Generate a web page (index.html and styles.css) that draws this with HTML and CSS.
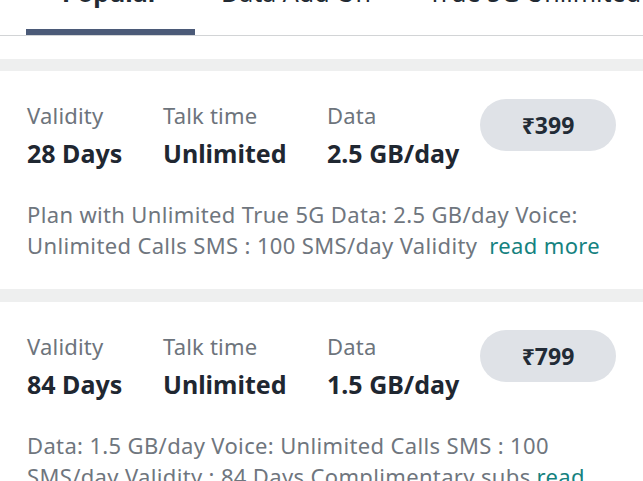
FILE: index.html
```html
<!DOCTYPE html>
<html lang="en">
<head>
<meta charset="utf-8">
<title>Plans</title>
<link rel="stylesheet" href="styles.css">
</head>
<body>
<nav class="tabs">
  <div class="tab tab-active"><span class="tab-label">Popular</span></div>
  <div class="tab tab-data"><span class="tab-label">Data Add On</span></div>
  <div class="tab tab-5g"><span class="tab-label">True 5G Unlimited</span></div>
</nav>
<div class="spacer"></div>
<div class="band"></div>
<section class="card">
  <div class="row">
    <div class="col col-validity">
      <div class="label">Validity</div>
      <div class="value">28 Days</div>
    </div>
    <div class="col col-talk">
      <div class="label">Talk time</div>
      <div class="value">Unlimited</div>
    </div>
    <div class="col col-data">
      <div class="label">Data</div>
      <div class="value">2.5 GB/day</div>
    </div>
    <div class="price">₹399</div>
  </div>
  <p class="desc">Plan with Unlimited True 5G Data: 2.5 GB/day Voice: Unlimited Calls SMS : 100 SMS/day Validity <a class="more more-gap" href="#">read more</a></p>
</section>
<div class="band band-b"></div>
<section class="card">
  <div class="row">
    <div class="col col-validity">
      <div class="label">Validity</div>
      <div class="value">84 Days</div>
    </div>
    <div class="col col-talk">
      <div class="label">Talk time</div>
      <div class="value">Unlimited</div>
    </div>
    <div class="col col-data">
      <div class="label">Data</div>
      <div class="value">1.5 GB/day</div>
    </div>
    <div class="price">₹799</div>
  </div>
  <p class="desc">Data: 1.5 GB/day Voice: Unlimited Calls SMS : 100 SMS/day Validity : 84 Days Complimentary subs <a class="more" href="#">read more</a></p>
</section>
</body>
</html>
```
FILE: styles.css
```css
* { box-sizing: border-box; }
html, body {
  margin: 0;
  padding: 0;
  background: #ffffff;
  font-family: "Noto Sans", "Open Sans", sans-serif;
  overflow: hidden;
}
.tabs {
  display: flex;
  align-items: flex-start;
  height: 36px;
  padding-left: 26px;
  border-bottom: 1px solid #d2d4d6;
  overflow: hidden;
}
.tab {
  height: 35px;
  font-size: 25px;
  line-height: 30px;
  color: #222a33;
  white-space: nowrap;
}
.tab-label {
  display: block;
  margin-top: -23px;
}
.tab-active {
  width: 169px;
  text-align: center;
  font-weight: 700;
  border-bottom: 6px solid #4b5a78;
}
.tab-data {
  margin-left: 26px;
}
.tab-5g {
  margin-left: 57px;
}
.spacer { height: 23px; }
.band {
  height: 12px;
  background: #eeefef;
}
.band-b { height: 13px; }
.card {
  padding: 28px 27px 28px 27px;
  background: #ffffff;
}
.row {
  display: flex;
  align-items: flex-start;
}
.col { padding-top: 1px; }
.col-validity { width: 136px; }
.col-talk { width: 164px; }
.label {
  font-size: 22px;
  line-height: 30px;
  color: #6d747c;
  letter-spacing: 0.2px;
}
.value {
  margin-top: 6px;
  font-size: 25px;
  line-height: 34px;
  font-weight: 700;
  color: #1f2731;
}
.price {
  margin-left: auto;
  width: 136px;
  height: 52px;
  border-radius: 26px;
  background: #dfe2e7;
  display: flex;
  align-items: center;
  justify-content: center;
  font-size: 23px;
  font-weight: 700;
  color: #222b36;
}
.desc {
  margin: 29px 0 0 0;
  font-size: 22px;
  line-height: 31px;
  letter-spacing: 0.35px;
  color: #6f767e;
}
.more {
  color: #15827f;
  text-decoration: none;
}
.more-gap {
  margin-left: 6px;
}
```
